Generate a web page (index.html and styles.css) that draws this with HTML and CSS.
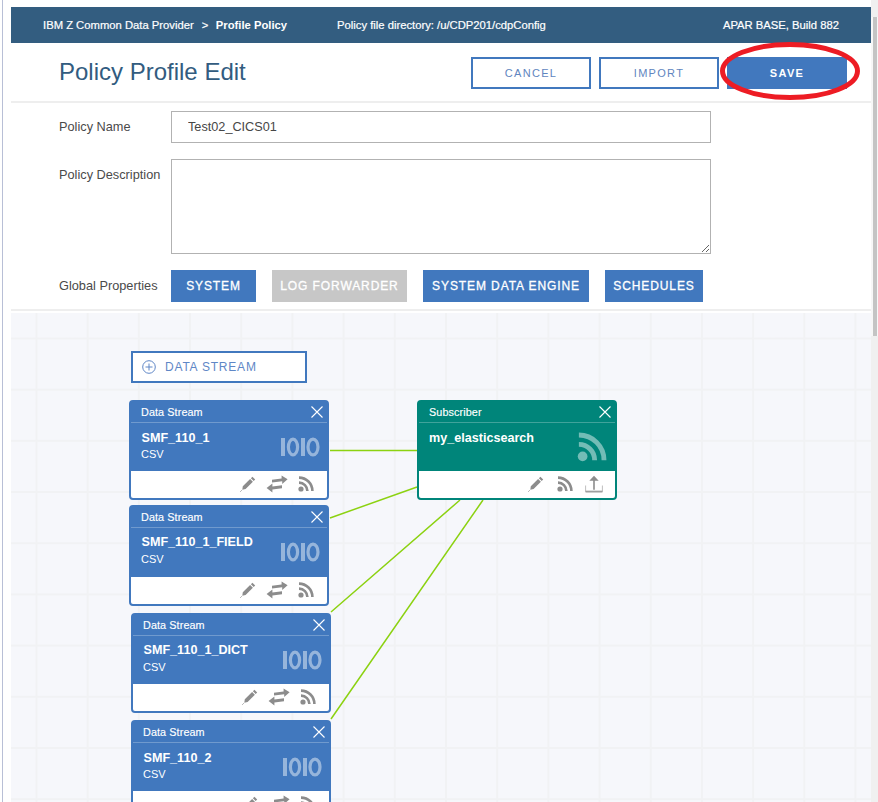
FILE: index.html
```html
<!DOCTYPE html>
<html lang="en">
<head>
<meta charset="utf-8">
<title>Policy Profile Edit</title>
<link rel="stylesheet" href="styles.css">
</head>
<body>
<svg class="defs" width="0" height="0" aria-hidden="true">
  <symbol id="i-close" viewBox="0 0 12 12"><path d="M.5.5l11 11M11.5.5l-11 11" fill="none" stroke="currentColor" stroke-width="1.1"/></symbol>
  <symbol id="i-bits" viewBox="0 0 40 20"><path fill="currentColor" d="M1 1h4v18H1zM21 1h4v18h-4z"/><ellipse cx="13" cy="10" rx="4.6" ry="7.8" fill="none" stroke="currentColor" stroke-width="3.2"/><ellipse cx="33" cy="10" rx="5" ry="7.8" fill="none" stroke="currentColor" stroke-width="3.2"/></symbol>
  <symbol id="i-rss" viewBox="0 0 16 16"><circle cx="3" cy="13" r="2.6" fill="currentColor"/><path d="M1 6.6a8.4 8.4 0 0 1 8.4 8.4M1 1.6A13.4 13.4 0 0 1 14.4 15" fill="none" stroke="currentColor" stroke-width="2.6"/></symbol>
  <symbol id="i-pencil" viewBox="0 0 16 16"><path fill="currentColor" d="M12.400 .8l2.800 2.800-1.500 1.500-2.800-2.800zM10.100 3l2.800 2.800-7.300 7.300-3.300.6.500-3.400z"/><path d="M.4 15.600l1.200-1.200" stroke="currentColor" fill="none"/></symbol>
  <symbol id="i-swap" viewBox="0 0 22 18"><path fill="currentColor" d="M6 4.800l9.600-1.200V.6L21.600 4.200l-5.400 4.800V6.200L6 7.400zM16 10.200l-9.600 1.200V8.600L.6 13l5.800 4.400v-3l9.600-1.200z"/></symbol>
  <symbol id="i-upload" viewBox="0 0 18 18"><path fill="currentColor" d="M9 .8l4.700 4.900h-3.900v9H8.200v-9H4.300z"/><path d="M.6 10.500v6.200h16.800v-6.200" fill="none" stroke="currentColor" stroke-width=".8" opacity=".7"/><path fill="currentColor" opacity=".7" d="M.6 15.600h16.800v1.900H.6z"/></symbol>
  <symbol id="i-plus" viewBox="0 0 14 14"><circle cx="7" cy="7" r="6.300" fill="none" stroke="currentColor"/><path d="M7 3.500v7M3.500 7h7" stroke="currentColor" fill="none"/></symbol>
</svg>

<div class="window">
  <header class="topbar">
    <div class="crumbs"><span>IBM Z Common Data Provider</span><span class="crumb-sep">&gt;</span><span class="crumb-current">Profile Policy</span></div>
    <div class="policy-dir">Policy file directory: /u/CDP201/cdpConfig</div>
    <div class="build">APAR BASE, Build 882</div>
  </header>

  <section class="titlebar">
    <h1 class="page-title">Policy Profile Edit</h1>
    <div class="actions">
      <button class="btn btn-outline">CANCEL</button>
      <button class="btn btn-outline">IMPORT</button>
      <button class="btn btn-solid">SAVE</button>
    </div>
    <svg class="annotation" viewBox="0 0 142 60" aria-hidden="true"><ellipse cx="71" cy="30" rx="67.500" ry="26.500" fill="none" stroke="#ed1c24" stroke-width="5"/></svg>
  </section>

  <form class="form">
    <div class="form-row">
      <label class="form-label">Policy Name</label>
      <input class="field" type="text" value="Test02_CICS01">
    </div>
    <div class="form-row">
      <label class="form-label form-label-top">Policy Description</label>
      <textarea class="field field-area"></textarea>
    </div>
    <div class="form-row form-row-global">
      <span class="form-label">Global Properties</span>
      <div class="global-buttons">
        <button type="button" class="gbtn gbtn-system">SYSTEM</button>
        <button type="button" class="gbtn gbtn-off">LOG FORWARDER</button>
        <button type="button" class="gbtn gbtn-engine">SYSTEM DATA ENGINE</button>
        <button type="button" class="gbtn gbtn-schedules">SCHEDULES</button>
      </div>
    </div>
  </form>

  <main class="canvas">
    <svg class="links" width="860" height="489" aria-hidden="true">
      <path d="M319 137.500H406M319 205L406 174M320 299L449 187M320 406L472 187"/>
    </svg>

    <button class="add-stream"><svg class="add-icon"><use href="#i-plus"/></svg>DATA STREAM</button>

    <article class="node node-a node-low">
      <div class="node-head"><span>Data Stream</span><svg class="node-close"><use href="#i-close"/></svg></div>
      <div class="node-body"><div class="node-name">SMF_110_1</div><div class="node-type">CSV</div><svg class="node-glyph"><use href="#i-bits"/></svg></div>
      <div class="node-foot"><svg class="tool"><use href="#i-pencil"/></svg><svg class="tool tool-wide"><use href="#i-swap"/></svg><svg class="tool"><use href="#i-rss"/></svg></div>
    </article>

    <article class="node node-b">
      <div class="node-head"><span>Data Stream</span><svg class="node-close"><use href="#i-close"/></svg></div>
      <div class="node-body"><div class="node-name">SMF_110_1_FIELD</div><div class="node-type">CSV</div><svg class="node-glyph"><use href="#i-bits"/></svg></div>
      <div class="node-foot"><svg class="tool"><use href="#i-pencil"/></svg><svg class="tool tool-wide"><use href="#i-swap"/></svg><svg class="tool"><use href="#i-rss"/></svg></div>
    </article>

    <article class="node node-c">
      <div class="node-head"><span>Data Stream</span><svg class="node-close"><use href="#i-close"/></svg></div>
      <div class="node-body"><div class="node-name">SMF_110_1_DICT</div><div class="node-type">CSV</div><svg class="node-glyph"><use href="#i-bits"/></svg></div>
      <div class="node-foot"><svg class="tool"><use href="#i-pencil"/></svg><svg class="tool tool-wide"><use href="#i-swap"/></svg><svg class="tool"><use href="#i-rss"/></svg></div>
    </article>

    <article class="node node-d node-low">
      <div class="node-head"><span>Data Stream</span><svg class="node-close"><use href="#i-close"/></svg></div>
      <div class="node-body"><div class="node-name">SMF_110_2</div><div class="node-type">CSV</div><svg class="node-glyph"><use href="#i-bits"/></svg></div>
      <div class="node-foot"><svg class="tool"><use href="#i-pencil"/></svg><svg class="tool tool-wide"><use href="#i-swap"/></svg><svg class="tool"><use href="#i-rss"/></svg></div>
    </article>

    <article class="node node-sub node-low">
      <div class="node-head"><span>Subscriber</span><svg class="node-close"><use href="#i-close"/></svg></div>
      <div class="node-body"><div class="node-name">my_elasticsearch</div><svg class="node-glyph node-glyph-rss"><use href="#i-rss"/></svg></div>
      <div class="node-foot"><svg class="tool"><use href="#i-pencil"/></svg><svg class="tool"><use href="#i-rss"/></svg><svg class="tool tool-upload"><use href="#i-upload"/></svg></div>
    </article>
  </main>
</div>

<div class="scrollbar"><div class="scroll-thumb"></div></div>
</body>
</html>
```

FILE: styles.css
```css
* { box-sizing: border-box; }

html, body {
  margin: 0;
  height: 100%;
  overflow: hidden;
}

body {
  display: flex;
  background: #fff;
  font-family: "Liberation Sans", Arial, sans-serif;
  color: #464646;
}

.defs { position: absolute; }

.window {
  flex: 1;
  min-width: 0;
  height: 802px;
  margin-left: 2px;
  padding: 7px 0 0 8px;
  border-left: 1px solid #b8bfd6;
  display: flex;
  flex-direction: column;
}

/* Top bar */
.topbar {
  flex: none;
  height: 36px;
  padding: 0 32px 0 32px;
  display: flex;
  align-items: center;
  background: #335d80;
  color: #fff;
  font-size: 11.250px;
  font-weight: 400;
  -webkit-text-stroke: .2px #fff;
}

.crumb-sep { margin: 0 7.500px 0 8px; }
.crumb-current { font-weight: 700; -webkit-text-stroke: 0; }
.policy-dir { margin-left: 50px; }
.build { margin-left: auto; }

/* Title bar */
.titlebar {
  flex: none;
  position: relative;
  height: 60px;
  padding: 0 24px 0 48px;
  display: flex;
  align-items: center;
  justify-content: space-between;
  border-bottom: 2px solid #eeeeee;
}

.page-title {
  margin: 0;
  font-size: 24px;
  font-weight: 400;
  color: #325c80;
}

.actions {
  display: flex;
  gap: 8px;
  margin-top: 2px;
}

.btn {
  width: 120px;
  height: 32px;
  padding: 0;
  border: 2px solid #4178be;
  font: 400 11px "Liberation Sans", Arial, sans-serif;
  letter-spacing: 1.300px;
}

.btn-outline { background: #fff; color: #5f85c0; }
.btn-solid { background: #4178be; color: #fff; font-weight: 700; }

.annotation {
  position: absolute;
  left: 708px;
  top: -2px;
  width: 142px;
  height: 60px;
  pointer-events: none;
}

/* Form */
.form {
  flex: none;
  height: 208px;
  padding: 8px 0 0 48px;
  border-bottom: 2px solid #eeeeee;
  margin-bottom: 2px;
  display: flex;
  flex-direction: column;
  gap: 16px;
}

.form-row {
  display: flex;
  align-items: center;
}

.form-row:nth-child(2) { align-items: flex-start; }

.form-label {
  flex: none;
  width: 112px;
  margin-bottom: 2px;
  font-size: 12.750px;
  color: #4a4a4a;
}

.form-label-top { padding-top: 8px; }

.field {
  width: 540px;
  height: 32px;
  padding: 0 16px;
  border: 1px solid #b2b2b2;
  border-radius: 0;
  background: #fff;
  color: #464646;
  font: 400 12.700px "Liberation Sans", Arial, sans-serif;
}

.field-area {
  height: 95px;
  padding: 8px 16px;
  display: block;
  resize: vertical;
}

.global-buttons {
  display: flex;
  gap: 16px;
}

.gbtn {
  height: 32px;
  padding: 0;
  border: 0;
  background: #4178be;
  color: #fff;
  font: 400 12px "Liberation Sans", Arial, sans-serif;
  letter-spacing: .9px;
  -webkit-text-stroke: .3px #fff;
}

.gbtn-system { width: 85px; }
.gbtn-off { width: 135px; background: #c7c7c7; }
.gbtn-engine { width: 166px; }
.gbtn-schedules { width: 98px; }

/* Canvas */
.canvas {
  flex: 1;
  min-height: 0;
  position: relative;
  overflow: hidden;
  background-color: #f6f7fb;
  background-image:
    linear-gradient(to right, #f1f2f4 2px, transparent 2px),
    linear-gradient(to bottom, #f1f2f4 2px, transparent 2px);
  background-size: 51.200px 51.200px;
  background-position: 24.500px 24.500px;
}

.links {
  position: absolute;
  left: 0;
  top: 0;
}

.links path {
  fill: none;
  stroke: #8cd211;
  stroke-width: 1.500;
}

.add-stream {
  position: absolute;
  left: 120px;
  top: 38px;
  width: 176px;
  height: 32px;
  padding: 0 0 0 9px;
  display: flex;
  align-items: center;
  gap: 9px;
  border: 2px solid #4178be;
  background: #fff;
  color: #5f87c6;
  font: 400 12px "Liberation Sans", Arial, sans-serif;
  letter-spacing: .8px;
}

.add-icon { width: 14px; height: 14px; }

/* Nodes */
.node {
  position: absolute;
  width: 200px;
  height: 100px;
  display: flex;
  flex-direction: column;
  border: 2px solid #4178be;
  border-radius: 4px;
  background: #4178be;
  color: #fff;
}

.node-a { left: 118px; top: 87px; }
.node-b { left: 118px; top: 192px; height: 101px; }
.node-c { left: 120px; top: 300px; }
.node-d { left: 120px; top: 407px; }
.node-sub { left: 406px; top: 87px; background: #00857a; border-color: #00857a; }

.node-head {
  flex: none;
  height: 21px;
  padding: 0 4px 0 10px;
  display: flex;
  align-items: center;
  justify-content: space-between;
  border-bottom: 1px solid rgba(255, 255, 255, .25);
  font-size: 10.800px;
  letter-spacing: .1px;
  -webkit-text-stroke: .15px #fff;
}

.node-close { width: 12px; height: 12px; margin-right: 0; }

.node-body {
  flex: 1;
  position: relative;
  padding: 6px 10px 0 10.500px;
}

.node-low .node-body { padding-top: 7px; }
.node-low .node-type { margin-top: 1px; }
.node-sub .node-body { padding-left: 10px; }

.node-name {
  font-size: 12.600px;
  font-weight: 700;
  line-height: 16px;
}

.node-type {
  margin: 2px 0 0 -.5px;
  font-size: 11px;
  line-height: 14px;
}

.node-glyph {
  position: absolute;
  right: 7px;
  top: 14px;
  width: 40px;
  height: 20px;
  color: rgba(255, 255, 255, .45);
}

.node-glyph-rss {
  right: 8px;
  top: 9px;
  width: 30px;
  height: 30px;
}

.node-foot {
  flex: none;
  height: 27px;
  padding: 0 13px 2px 0;
  display: flex;
  align-items: center;
  justify-content: flex-end;
  gap: 13px;
  background: #fff;
  border-radius: 0 0 2px 2px;
  color: #8c8c8c;
}

.tool { width: 16px; height: 16px; }
.tool-wide { width: 22px; height: 18px; margin: 0 -3px; }
.tool-upload { width: 18px; height: 18px; margin: 0 -1px 0 -1px; }

/* Browser scrollbar */
.scrollbar {
  flex: none;
  width: 7px;
  height: 802px;
  background: #f0f0f0;
}

.scroll-thumb {
  height: 319px;
  margin-top: 17px;
  border-left: 2px solid #f7f7f7;
  border-right: 1px solid #f7f7f7;
  background: #c4c4c4;
}
```
